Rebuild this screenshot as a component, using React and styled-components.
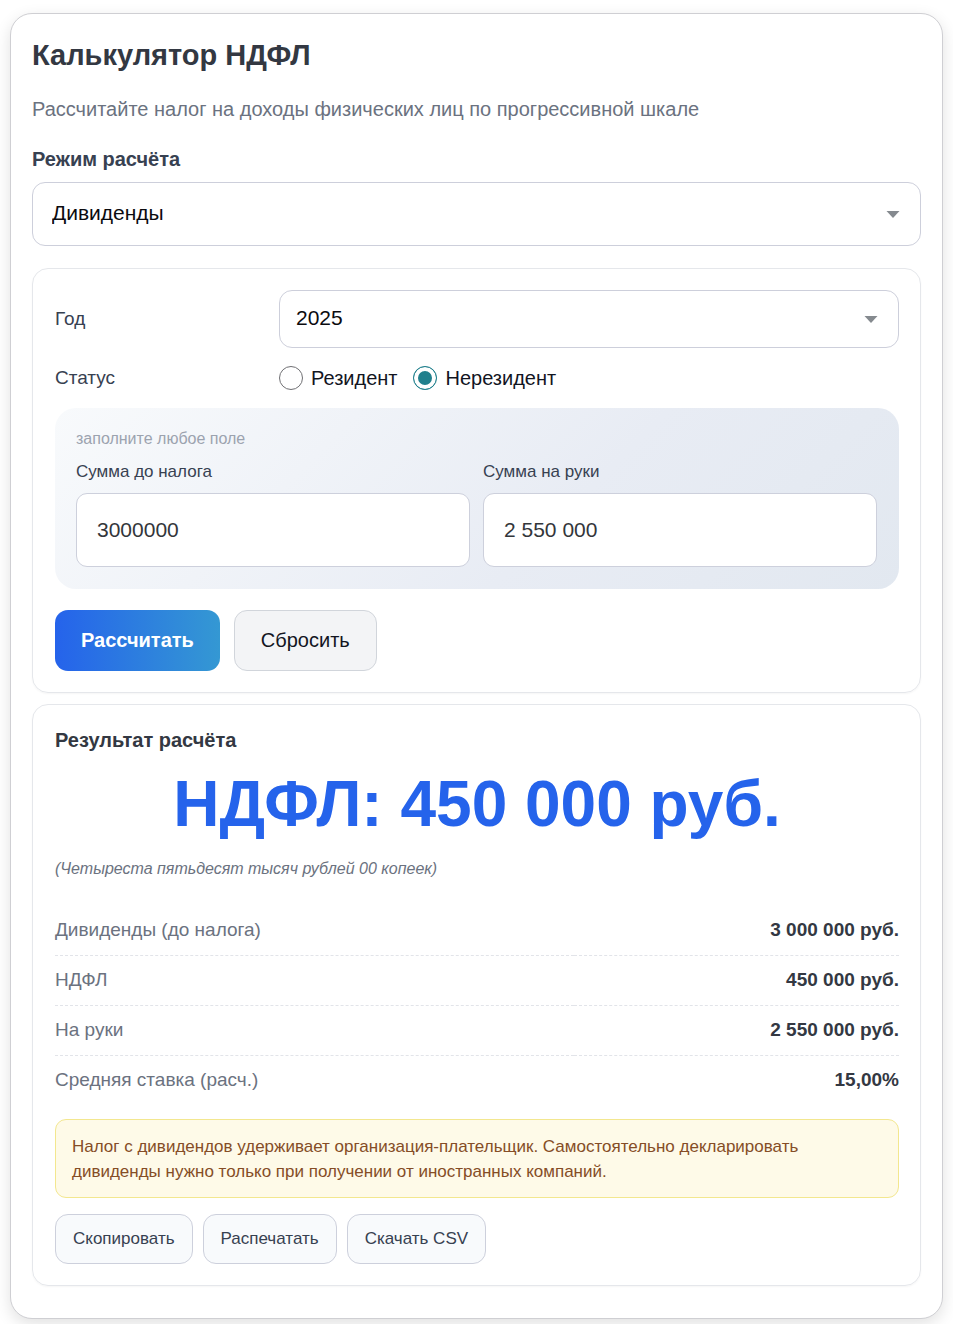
import { useState } from "react"
import styled, { createGlobalStyle } from "styled-components"

const GlobalStyle = createGlobalStyle`
  * {
    box-sizing: border-box;
  }

  body {
    margin: 0;
    background-color: #fff;
    color: #333842;
    font-family: "Liberation Sans", Arial, sans-serif;
    font-size: 19px;
  }

  button, input, select {
    font-family: inherit;
    margin: 0;
  }
`

const Page = styled.main`
  padding: 13px 10px 5px;
`

const Card = styled.section`
  background-color: #fff;
  border: 1px solid #cfcfd3;
  border-radius: 22px;
  box-shadow: 0 5px 16px rgba(0, 0, 0, 0.12);
  padding: 21px 21px 32px;
`

const Title = styled.h1`
  font-size: 29px;
  font-weight: 700;
  line-height: 40px;
  margin: 0 0 18px;
`

const Subtitle = styled.p`
  color: #6b7280;
  font-size: 20px;
  line-height: 32px;
  margin: 0 0 21px;
`

const ModeLabel = styled.label`
  color: #374151;
  display: block;
  font-size: 20px;
  font-weight: 700;
  line-height: 26px;
  margin-bottom: 10px;
`

const SelectWrap = styled.div`
  position: relative;
`

const Select = styled.select`
  appearance: none;
  background-color: #fff;
  border: 1px solid #cdcfdb;
  border-radius: 13px;
  color: #0b0b0f;
  display: block;
  font-size: 21px;
  height: ${({ $large }) => ($large ? "64px" : "58px")};
  padding: ${({ $large }) => ($large ? "0 48px 4px 19px" : "0 48px 4px 16px")};
  width: 100%;
`

const Arrow = styled.svg`
  fill: #858a8f;
  height: 7px;
  pointer-events: none;
  position: absolute;
  right: 21px;
  top: 50%;
  margin-top: -3px;
  width: 14px;
`

const Panel = styled.div`
  border: 1px solid #e5e7eb;
  border-radius: 16px;
  box-shadow: 0 1px 2px rgba(0, 0, 0, 0.04);
  margin-top: ${({ $gap }) => $gap};
  padding: 21px 21px 21px 22px;
`

const Row = styled.div`
  align-items: center;
  color: #374151;
  display: grid;
  gap: 16px;
  grid-template-columns: 208px 1fr;
`

const FieldLabel = styled.label`
  font-size: 19px;
  line-height: 24px;
`

const RadioGroup = styled.div`
  align-items: center;
  display: flex;
  gap: 16px;
  height: 60px;
`

const RadioLabel = styled.label`
  align-items: center;
  color: #12151f;
  display: flex;
  font-size: 20px;
  gap: 8px;
  line-height: 28px;
`

const Radio = styled.input`
  appearance: none;
  background-color: #fff;
  border: 1px solid #6f6f73;
  border-radius: 50%;
  height: 24px;
  width: 24px;

  &:checked {
    background-color: #21808d;
    border-color: #21808d;
    box-shadow: inset 0 0 0 4px #fff;
  }
`

const AmountBox = styled.div`
  background: linear-gradient(135deg, #f8fafc 0%, #e8ecf4 60%, #e2e8f0 100%);
  border-radius: 21px;
  padding: 20px 22px 22px 21px;
`

const Hint = styled.div`
  color: #9ca3af;
  font-size: 16px;
  line-height: 22px;
  margin-bottom: 12px;
`

const Amounts = styled.div`
  display: grid;
  gap: 13px;
  grid-template-columns: 1fr 1fr;
`

const AmountLabel = styled.label`
  color: #374151;
  display: block;
  font-size: 17px;
  line-height: 20px;
`

const AmountInput = styled.input`
  background-color: #fff;
  border: 1px solid #cdd0dc;
  border-radius: 11px;
  color: #33363a;
  display: block;
  font-size: 21px;
  height: 74px;
  margin-top: 11px;
  outline: none;
  padding: 0 20px;
  width: 100%;
`

const Actions = styled.div`
  display: flex;
  gap: 14px;
  margin-top: 21px;
`

const Button = styled.button`
  background: #f3f4f6;
  border: 1px solid #d1d5db;
  border-radius: 13px;
  color: #12151f;
  cursor: pointer;
  font-size: 20px;
  height: 61px;
  line-height: 28px;
  padding: 0 26px 2px;
`

const PrimaryButton = styled(Button)`
  background: linear-gradient(90deg, #2563eb, #3498d3);
  border: none;
  color: #fff;
  font-weight: 700;
`

const ResultTitle = styled.h2`
  font-size: 20px;
  font-weight: 700;
  line-height: 28px;
  margin: 0 0 14px;
`

const Total = styled.div`
  color: #2563eb;
  font-size: 64px;
  font-weight: 700;
  line-height: 72px;
  text-align: center;
`

const Words = styled.div`
  color: #6b7280;
  font-size: 16px;
  font-style: italic;
  line-height: 24px;
  margin: 17px 0 24px;
`

const Table = styled.table`
  border-collapse: collapse;
  line-height: 24px;
  width: 100%;

  tr:not(:last-child) {
    border-bottom: 1px dashed #e2e4e9;
  }

  th {
    color: #6b7280;
    font-size: 19px;
    font-weight: 400;
    height: 50px;
    padding: 0;
    text-align: left;
  }

  td {
    font-size: 19px;
    font-weight: 700;
    padding: 0;
    text-align: right;
  }
`

const Notice = styled.p`
  background-color: #fefae8;
  border: 1px solid #f3e78f;
  border-radius: 11px;
  color: #854d26;
  font-size: 17px;
  line-height: 25px;
  margin: 14px 0 16px;
  padding: 14px 16px 13px;
`

const Tools = styled.div`
  display: flex;
  gap: 10px;
`

const ToolButton = styled.button`
  background-color: #f8fafc;
  border: 1px solid #cdd0dc;
  border-radius: 13px;
  color: #374151;
  cursor: pointer;
  font-size: 17px;
  height: 50px;
  padding: 0 17px;
`

const rows = [
  ["Дивиденды (до налога)", "3 000 000 руб."],
  ["НДФЛ", "450 000 руб."],
  ["На руки", "2 550 000 руб."],
  ["Средняя ставка (расч.)", "15,00%"],
]

const Dropdown = ({ id, large, options }) => (
  <SelectWrap>
    <Select id={id} $large={large}>
      {options.map((option) => (
        <option key={option}>{option}</option>
      ))}
    </Select>
    <Arrow viewBox="0 0 14 7" aria-hidden="true">
      <path d="M0.5 0h13L7 7z" />
    </Arrow>
  </SelectWrap>
)

export default function App() {
  const [status, setStatus] = useState("Нерезидент")
  const [gross, setGross] = useState("3000000")
  const [net, setNet] = useState("2 550 000")

  const reset = () => {
    setGross("")
    setNet("")
  }

  return (
    <Page>
      <GlobalStyle />
      <Card>
        <Title>Калькулятор НДФЛ</Title>
        <Subtitle>Рассчитайте налог на доходы физических лиц по прогрессивной шкале</Subtitle>
        <ModeLabel htmlFor="mode">Режим расчёта</ModeLabel>
        <Dropdown id="mode" large options={["Дивиденды"]} />

        <Panel $gap="22px">
          <Row>
            <FieldLabel htmlFor="year">Год</FieldLabel>
            <Dropdown id="year" options={["2025"]} />
          </Row>
          <Row>
            <FieldLabel as="span" id="status">Статус</FieldLabel>
            <RadioGroup role="radiogroup" aria-labelledby="status">
              {["Резидент", "Нерезидент"].map((name) => (
                <RadioLabel key={name}>
                  <Radio
                    type="radio"
                    name="status"
                    checked={status === name}
                    onChange={() => setStatus(name)}
                  />
                  {name}
                </RadioLabel>
              ))}
            </RadioGroup>
          </Row>
          <AmountBox>
            <Hint>заполните любое поле</Hint>
            <Amounts>
              <AmountLabel>
                Сумма до налога
                <AmountInput value={gross} onChange={(e) => setGross(e.target.value)} />
              </AmountLabel>
              <AmountLabel>
                Сумма на руки
                <AmountInput value={net} onChange={(e) => setNet(e.target.value)} />
              </AmountLabel>
            </Amounts>
          </AmountBox>
          <Actions>
            <PrimaryButton type="button">Рассчитать</PrimaryButton>
            <Button type="button" onClick={reset}>Сбросить</Button>
          </Actions>
        </Panel>

        <Panel $gap="11px">
          <ResultTitle>Результат расчёта</ResultTitle>
          <Total>НДФЛ: 450 000 руб.</Total>
          <Words>(Четыреста пятьдесят тысяч рублей 00 копеек)</Words>
          <Table>
            <tbody>
              {rows.map(([name, value]) => (
                <tr key={name}>
                  <th scope="row">{name}</th>
                  <td>{value}</td>
                </tr>
              ))}
            </tbody>
          </Table>
          <Notice>
            Налог с дивидендов удерживает организация-плательщик. Самостоятельно декларировать
            дивиденды нужно только при получении от иностранных компаний.
          </Notice>
          <Tools>
            <ToolButton type="button">Скопировать</ToolButton>
            <ToolButton type="button">Распечатать</ToolButton>
            <ToolButton type="button">Скачать CSV</ToolButton>
          </Tools>
        </Panel>
      </Card>
    </Page>
  )
}
